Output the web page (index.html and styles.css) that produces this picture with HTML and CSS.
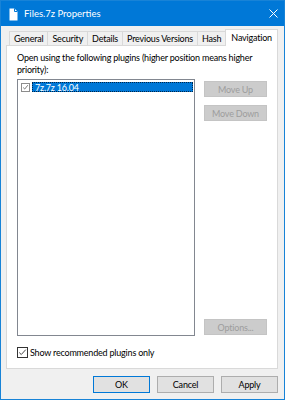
FILE: index.html
```html
<!DOCTYPE html>
<html>
	<head>
		<title>Files.7z Properties</title>
		<link rel="stylesheet" href="styles.css">
	</head>
	<body>
		<div class="window">
			<div class="titlebar">
				<svg class="file-icon" viewBox="0 0 9 13">
					<path d="M0.5 0.5 H5.5 L8.5 3.5 V12.5 H0.5 Z" fill="#fff" />
					<path d="M5.5 0.5 V3.5 H8.5" fill="none" stroke="#0078d7" stroke-width="1" />
				</svg>
				<span class="title">Files.7z Properties</span>
				<svg class="close" viewBox="0 0 9 9">
					<path d="M0.5 0.5 L8.5 8.5 M8.5 0.5 L0.5 8.5" stroke="#fff" stroke-width="1" />
				</svg>
			</div>
			<div class="content">
				<div class="tabs">
					<div class="tab">General</div>
					<div class="tab">Security</div>
					<div class="tab">Details</div>
					<div class="tab">Previous Versions</div>
					<div class="tab">Hash</div>
					<div class="tab active">Navigation</div>
				</div>
				<div class="panel">
					<p class="intro">Open using the following plugins (higher position means higher priority):</p>
					<div class="plugins">
						<div class="listbox">
							<div class="item">
								<span class="check small">
									<svg viewBox="0 0 9 9"><path d="M1.5 4.5 L3.5 6.5 L7.5 1.5" fill="none" stroke="#555" stroke-width="1" /></svg>
								</span>
								<span class="label">7z.7z 16.04</span>
							</div>
						</div>
						<div class="side">
							<button disabled>Move Up</button>
							<button disabled>Move Down</button>
							<button disabled class="options">Options...</button>
						</div>
					</div>
					<label class="recommend">
						<span class="check">
							<svg viewBox="0 0 11 11"><path d="M1.5 5.5 L4 8 L9.5 2" fill="none" stroke="#333" stroke-width="1.1" /></svg>
						</span>
						Show recommended plugins only
					</label>
				</div>
				<div class="actions">
					<button class="default">OK</button>
					<button>Cancel</button>
					<button>Apply</button>
				</div>
			</div>
		</div>
	</body>
</html>
```

FILE: styles.css
```css
body {
	margin: 0;
	font-family: Lato, "Liberation Sans", sans-serif;
	font-size: 9px;
	letter-spacing: -0.2px;
	color: #000;
}

.window {
	width: 285px;
	height: 400px;
	box-sizing: border-box;
	border: 1px solid #1883d7;
	background: #f0f0f0;
	display: flex;
	flex-direction: column;
}

.titlebar {
	height: 25px;
	background: #0078d7;
	color: #fff;
	display: flex;
	align-items: center;
	padding: 0 6px 0 8px;
}

.titlebar .file-icon {
	width: 9px;
	height: 13px;
	margin-top: 1px;
}

.titlebar .title {
	font-size: 9.5px;
	letter-spacing: 0;
	margin-left: 6px;
	flex: 1;
}

.titlebar .close {
	width: 9px;
	height: 9px;
}

.content {
	flex: 1;
	padding: 5px 6px 0 5px;
	display: flex;
	flex-direction: column;
}

.tabs {
	display: flex;
	align-items: flex-end;
	padding-left: 3px;
	height: 14px;
	position: relative;
	z-index: 1;
}

.tab {
	height: 14px;
	box-sizing: border-box;
	border: 1px solid #d9d9d9;
	border-bottom: none;
	margin-right: -1px;
	padding: 0 4px;
	line-height: 13px;
	background: #f0f0f0;
}

.tab.active {
	height: 17px;
	margin-bottom: -1px;
	background: #fff;
	padding: 0 5px;
	line-height: 15px;
	margin-right: 0;
	position: relative;
}

.panel {
	height: 324px;
	box-sizing: border-box;
	border: 1px solid #d9d9d9;
	background: #fff;
	padding: 6px 9px 0 10px;
	display: flex;
	flex-direction: column;
}

.intro {
	margin: 0;
	line-height: 12px;
}

.plugins {
	display: flex;
	margin-top: 3px;
	gap: 9px;
}

.listbox {
	width: 178px;
	height: 257px;
	box-sizing: border-box;
	border: 1px solid #828790;
	padding: 2px 1px 0 3px;
}

.item {
	display: flex;
	align-items: center;
	height: 10px;
}

.check {
	width: 11px;
	height: 11px;
	box-sizing: border-box;
	border: 1px solid #333;
	background: #fff;
	display: inline-flex;
}

.check svg {
	width: 100%;
	height: 100%;
}

.check.small {
	width: 9px;
	height: 9px;
	border-color: #8c8c8c;
}

.item .label {
	flex: 1;
	margin-left: 2px;
	height: 10px;
	box-sizing: border-box;
	background: #0078d7;
	color: #fff;
	line-height: 9px;
	padding-left: 2px;
	border: 1px dotted #00264a;
}

.side {
	width: 63px;
	display: flex;
	flex-direction: column;
	padding-top: 2px;
	gap: 8px;
}

.side .options {
	margin-top: auto;
	margin-bottom: 1px;
}

button {
	font-family: inherit;
	font-size: 9px;
	letter-spacing: inherit;
	height: 16px;
	padding: 0;
	box-sizing: border-box;
	border: 1px solid #adadad;
	background: #e1e1e1;
	color: #000;
}

button:disabled {
	background: #cccccc;
	border-color: #c4c4c4;
	color: #9d9d9d;
}

.recommend {
	display: flex;
	align-items: center;
	margin-top: 11px;
	gap: 2px;
	line-height: 11px;
}

.actions {
	display: flex;
	justify-content: flex-end;
	gap: 7px;
	margin-top: 7px;
}

.actions button {
	width: 57px;
	height: 17px;
}

.actions button.default {
	border-color: #0078d7;
}
```
